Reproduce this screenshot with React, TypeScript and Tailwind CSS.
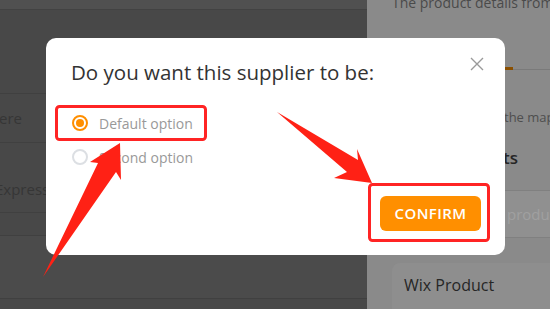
import React from 'react';

const font = { fontFamily: '"Open Sans", "Liberation Sans", sans-serif' };

// Red annotation arrows + highlight boxes drawn over the screenshot
const Annotations = () => (
  <svg className="absolute inset-0 pointer-events-none" width="550" height="309" viewBox="0 0 550 309">
    <rect x="56.5" y="106.5" width="149" height="33" rx="3" fill="none" stroke="#ff2424" strokeWidth="3" />
    <rect x="369.5" y="184.5" width="119" height="56" rx="3" fill="none" stroke="#ff2424" strokeWidth="3" />
    <polygon points="43,277 98,163 90,162 120,143 121,180 116,172" fill="#ff2115" />
    <polygon points="277,112 358,160 357,149 372,183 334,178 347,172" fill="#ff2115" />
  </svg>
);

const Radio = ({ checked, label }: { checked?: boolean; label: string }) => (
  <label className="flex items-center h-[34px] cursor-pointer">
    <span
      className={`w-4 h-4 rounded-full border-2 flex items-center justify-center ${
        checked ? 'border-[#ff8f00]' : 'border-[#dcdfe3]'
      }`}
    >
      {checked && <span className="w-2 h-2 rounded-full bg-[#ff8f00]" />}
    </span>
    <span className="ml-[11px] text-[14px] text-[#999]">{label}</span>
  </label>
);

export default function App() {
  return (
    <div className="relative w-[550px] h-[309px] overflow-hidden flex" style={font}>
      {/* left page area (dimmed) */}
      <div className="w-[367px] shrink-0 bg-[#484848] flex flex-col">
        <div className="h-[10px] bg-[#505050] border-b border-[#424242]" />
        <div className="h-[83px]" />
        <div className="h-[49px] border-t border-[#404040] flex items-center">
          <span className="text-[15px] text-[#363636] ml-[-1px]">ere</span>
        </div>
        <div className="h-[70px] border-t border-[#404040] flex items-end pb-[12px]">
          <span className="text-[15px] text-[#363636] ml-[-5px]">Express</span>
        </div>
        <div className="h-[23px] border-t border-[#404040]" />
        <div className="h-[63px] border-t border-[#404040] bg-[#4b4b4b]" />
        <div className="flex-1 border-t border-[#404040]" />
      </div>

      {/* right drawer (dimmed) */}
      <div className="flex-1 bg-[#8a8a8a] flex flex-col">
        <div className="pl-[25px] mt-[-7px] h-[20px] leading-[20px] text-[14px] text-[#4a4a4a] whitespace-nowrap">
          The product details from
        </div>
        <div className="mt-[54px] h-[3px] relative">
          <div className="absolute left-0 right-0 top-[2px] h-px bg-[#7a7a7a]" />
          <div className="absolute left-[120px] top-0 w-[26px] h-[3px] bg-[#8a4f00]" />
        </div>
        <div className="pl-[137px] mt-[37px] h-[20px] leading-[20px] text-[13px] text-[#4e4e4e] whitespace-nowrap">
          the mapping
        </div>
        <div className="pl-[78px] mt-[19px] h-[24px] leading-[24px] text-[17px] font-semibold text-[#262626] whitespace-nowrap">
          Products
        </div>
        <div className="mt-[20px] h-[48px] shrink-0 bg-[#909090] border-y border-[#808080] flex items-center pl-[140px] text-[15px] text-[#a0a0a0] whitespace-nowrap">
          product name
        </div>
        <div className="ml-[25px] mt-[25px] flex-1 bg-[#8e8e8e] rounded-tl-[8px] flex items-start pt-[10px] pl-[12px] text-[16px] text-[#262626]">
          Wix Product
        </div>
      </div>

      {/* modal */}
      <div className="absolute left-[46px] top-[38px] w-[459px] h-[217px] bg-white rounded-[10px] flex flex-col px-[25px] pt-[20px] pb-[24px]">
        <div className="flex items-start justify-between">
          <h2 className="text-[20.5px] text-[#333] leading-[28px] whitespace-nowrap">Do you want this supplier to be:</h2>
          <button className="mt-[-1px] mr-[-4px] text-[#9a9a9a]">
            <svg width="14" height="14" viewBox="0 0 14 14">
              <path d="M1 1L13 13M13 1L1 13" stroke="currentColor" strokeWidth="1.4" />
            </svg>
          </button>
        </div>
        <div className="mt-[20px] ml-[1px] flex flex-col">
          <Radio checked label="Default option" />
          <Radio label="Second option" />
        </div>
        <div className="flex-1 flex items-end justify-end">
          <button className="w-[101px] h-[35px] rounded-[6px] bg-[#ff8f00] text-white text-[15px] font-semibold tracking-[0.4px] mr-[-1px]">
            CONFIRM
          </button>
        </div>
      </div>

      <Annotations />
    </div>
  );
}
